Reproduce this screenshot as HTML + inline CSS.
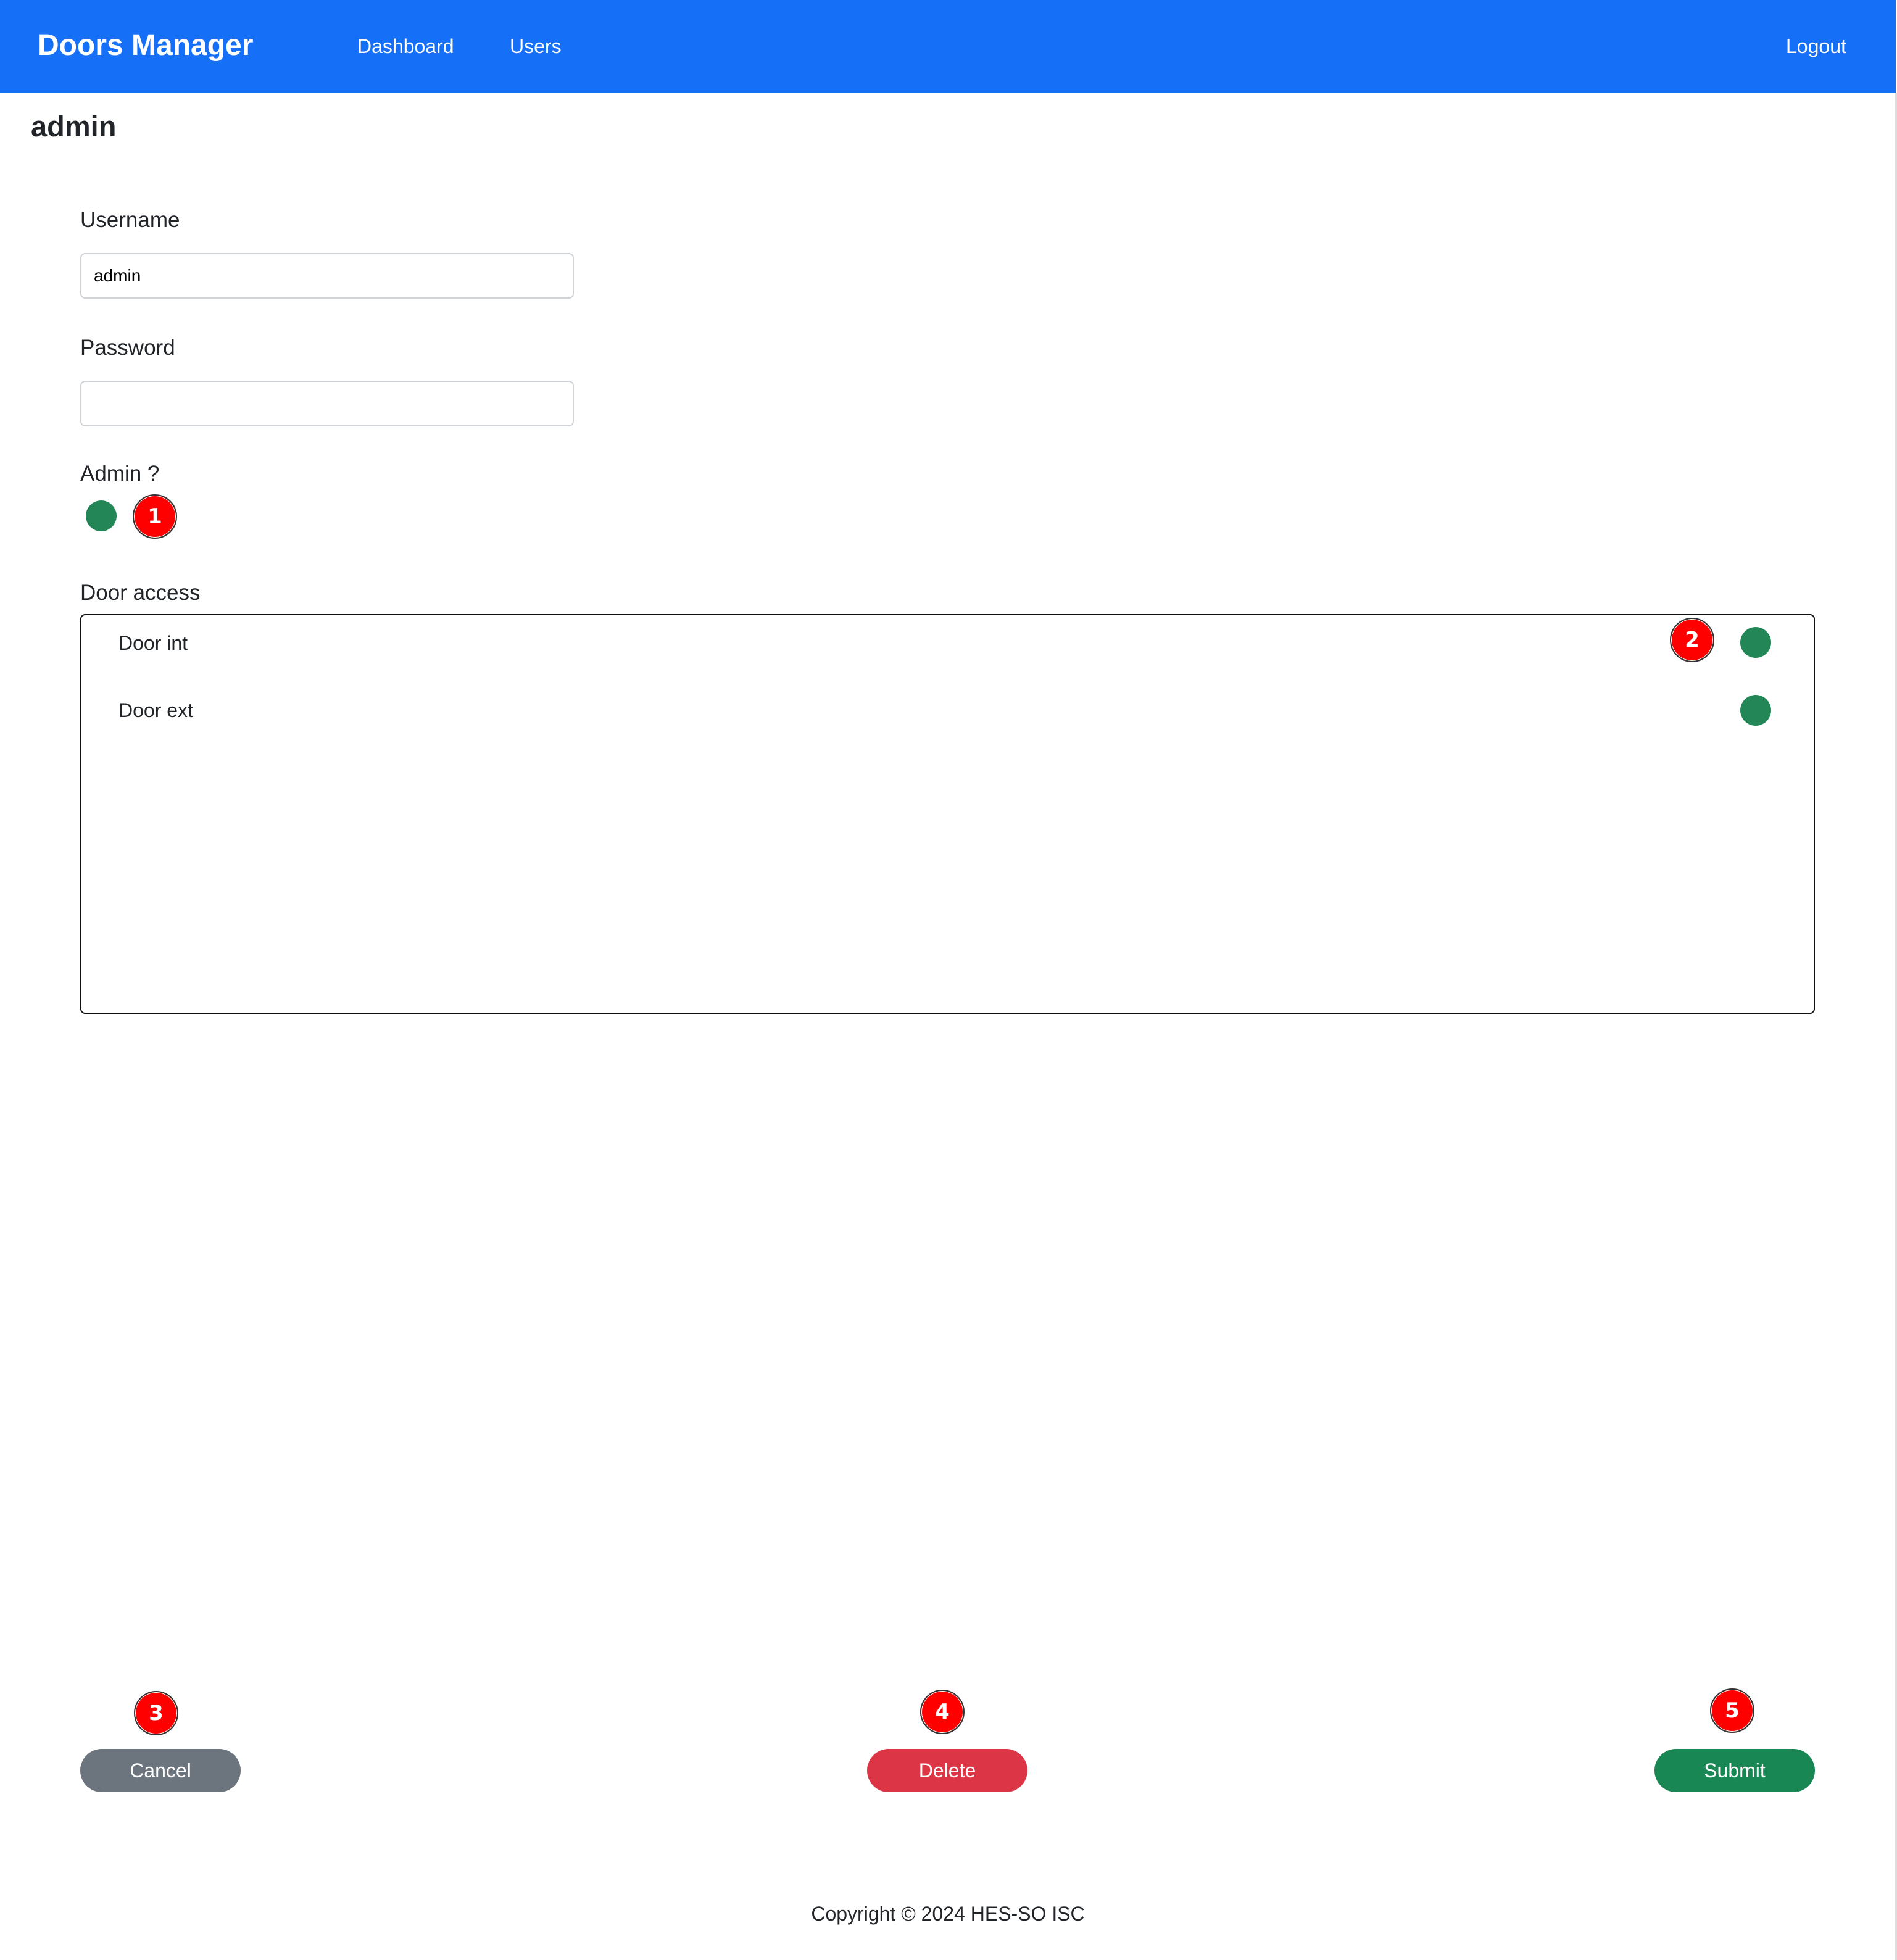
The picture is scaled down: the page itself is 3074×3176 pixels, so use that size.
<!DOCTYPE html>
<html><head><meta charset="utf-8"><style>
*{margin:0;padding:0;box-sizing:border-box}
body{width:3074px;height:3176px;position:relative;background:#fff;font-family:"Liberation Sans",Arial,sans-serif;color:#212529;overflow:hidden}
.a{position:absolute;white-space:nowrap}
.nav{position:absolute;left:0;top:0;width:3072px;height:150px;background:#1670f7}
.t{font-size:32px;line-height:40px}
.l{font-size:35px;line-height:40px}
.inp{position:absolute;left:130px;width:800px;height:74px;border:2px solid #cfd3d7;border-radius:8px;background:#fff}
.dot{position:absolute;width:50px;height:50px;border-radius:50%;background:#238657}
.bd{position:absolute;width:72px;height:72px;border-radius:50%;background:#f00;border:2px solid #333;box-shadow:0 0 0 1px #fff inset;color:#fff;font-weight:bold;font-size:34px;line-height:68px;text-align:center;font-family:"DejaVu Sans","Liberation Sans",sans-serif}
.btn{position:absolute;top:2833px;width:260px;height:70px;border-radius:35px;color:#fff;font-size:32px;line-height:70px;text-align:center}
</style></head><body>
<div class="nav"></div>
<div class="a" style="left:61px;top:46px;font-size:48px;line-height:56px;font-weight:bold;color:#fff">Doors Manager</div>
<div class="a t" style="left:579px;top:55px;color:#fff">Dashboard</div>
<div class="a t" style="left:826px;top:55px;color:#fff">Users</div>
<div class="a t" style="left:2894px;top:55px;color:#fff">Logout</div>
<div class="a" style="left:3071px;top:150px;width:3px;height:3026px;background:#ddd"></div>
<div class="a" style="left:50px;top:178px;font-size:47px;line-height:54px;font-weight:bold">admin</div>
<div class="a l" style="left:130px;top:337px">Username</div>
<div class="inp" style="top:410px"></div>
<div class="a" style="left:152px;top:430px;font-size:28px;line-height:34px;color:#000">admin</div>
<div class="a l" style="left:130px;top:544px">Password</div>
<div class="inp" style="top:617px"></div>
<div class="a l" style="left:130px;top:748px">Admin ?</div>
<div class="dot" style="left:139px;top:811px"></div>
<div class="bd" style="left:215px;top:801px">1</div>
<div class="a l" style="left:130px;top:941px">Door access</div>
<div class="a" style="left:130px;top:995px;width:2811px;height:648px;border:2.5px solid #111;border-radius:8px"></div>
<div class="a t" style="left:192px;top:1022px">Door int</div>
<div class="a t" style="left:192px;top:1131px">Door ext</div>
<div class="dot" style="left:2820px;top:1016px"></div>
<div class="dot" style="left:2820px;top:1126px"></div>
<div class="bd" style="left:2706px;top:1001px">2</div>
<div class="bd" style="left:217px;top:2740px">3</div>
<div class="bd" style="left:1491px;top:2738px">4</div>
<div class="bd" style="left:2771px;top:2736px">5</div>
<div class="btn" style="left:130px;top:2834px;background:#6c757d">Cancel</div>
<div class="btn" style="left:1405px;top:2834px;background:#dc3545">Delete</div>
<div class="btn" style="left:2681px;top:2834px;background:#198754">Submit</div>
<div class="a" style="left:0;width:3072px;top:3081px;text-align:center;font-size:32px;line-height:40px">Copyright © 2024 HES-SO ISC</div>
</body></html>
